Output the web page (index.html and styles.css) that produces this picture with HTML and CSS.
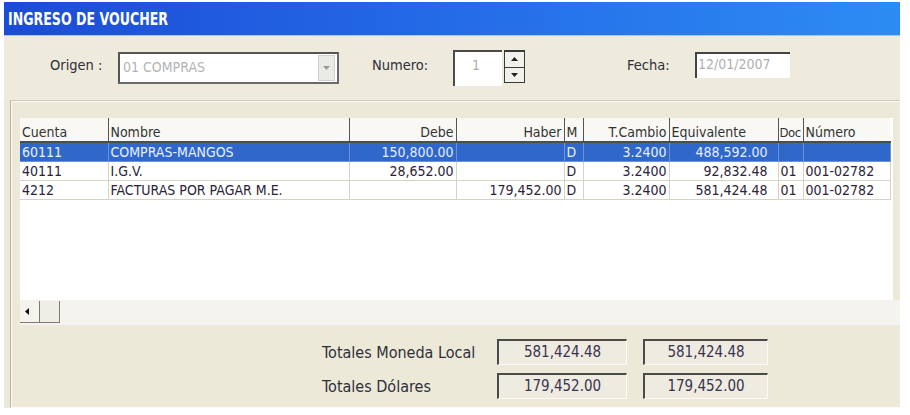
FILE: index.html
```html
<!DOCTYPE html>
<html lang="es">
<head>
<meta charset="utf-8">
<title>Ingreso de Voucher</title>
<link rel="stylesheet" href="styles.css">
</head>
<body>
<div class="window">
  <div class="titlebar"><span class="title">INGRESO DE VOUCHER</span></div>
  <div class="form">
    <span class="lbl lbl-origen">Origen :</span>
    <div class="combo">
      <span class="combo-text">01 COMPRAS</span>
      <span class="combo-btn"><svg width="9" height="5" viewBox="0 0 9 5"><path d="M1 0h7L4.5 4z" fill="#9a9a9a"/></svg></span>
    </div>
    <span class="lbl lbl-numero">Numero:</span>
    <div class="spin">
      <div class="spin-input">1</div>
      <div class="spin-btns">
        <span class="spin-btn"><svg width="7" height="4" viewBox="0 0 7 4"><path d="M3.5 0L7 4H0z" fill="#222"/></svg></span>
        <span class="spin-btn"><svg width="7" height="4" viewBox="0 0 7 4"><path d="M0 0h7L3.5 4z" fill="#222"/></svg></span>
      </div>
    </div>
    <span class="lbl lbl-fecha">Fecha:</span>
    <div class="datebox">12/01/2007</div>
  </div>
  <div class="panel">
    <div class="grid">
      <table>
        <colgroup>
          <col class="c-cuenta"><col class="c-nombre"><col class="c-debe"><col class="c-haber"><col class="c-m"><col class="c-tc"><col class="c-eq"><col class="c-doc"><col class="c-num">
        </colgroup>
        <thead>
          <tr>
            <th>Cuenta</th><th>Nombre</th><th class="r">Debe</th><th class="r">Haber</th><th>M</th><th class="r">T.Cambio</th><th>Equivalente</th><th class="doc">Doc</th><th class="last">Número</th>
          </tr>
        </thead>
        <tbody>
          <tr class="sel">
            <td>60111</td><td>COMPRAS-MANGOS</td><td class="r">150,800.00</td><td class="r"></td><td>D</td><td class="r">3.2400</td><td class="eq">488,592.00</td><td></td><td></td>
          </tr>
          <tr>
            <td>40111</td><td>I.G.V.</td><td class="r">28,652.00</td><td class="r"></td><td>D</td><td class="r">3.2400</td><td class="eq">92,832.48</td><td>01</td><td>001-02782</td>
          </tr>
          <tr>
            <td>4212</td><td>FACTURAS POR PAGAR M.E.</td><td class="r"></td><td class="r">179,452.00</td><td>D</td><td class="r">3.2400</td><td class="eq">581,424.48</td><td>01</td><td>001-02782</td>
          </tr>
        </tbody>
      </table>
    </div>
    <div class="hscroll">
      <span class="sb-btn"><svg width="4" height="7" viewBox="0 0 4 7"><path d="M4 0v7L0 3.5z" fill="#111"/></svg></span>
      <span class="sb-thumb"></span>
    </div>
    <div class="totals">
      <div class="tot-row">
        <span class="tot-label">Totales Moneda Local</span>
        <span class="tot-box w1">581,424.48</span>
        <span class="tot-box w2">581,424.48</span>
      </div>
      <div class="tot-row">
        <span class="tot-label">Totales Dólares</span>
        <span class="tot-box w1">179,452.00</span>
        <span class="tot-box w2">179,452.00</span>
      </div>
    </div>
  </div>
</div>
</body>
</html>
```
FILE: styles.css
```css
html, body {
  margin: 0;
  padding: 0;
  background: #ffffff;
}
body {
  font-family: "DejaVu Sans Condensed", "DejaVu Sans", sans-serif;
  color: #2b2535;
}
.window {
  margin: 2px 0 0 4px;
  width: 896px;
  height: 406px;
  background: #ece9d8;
}
.titlebar {
  height: 34px;
  background: linear-gradient(to right, #1c4bd5, #2368e6 45%, #2d8cf4);
  display: flex;
  align-items: center;
  padding-left: 4px;
  box-shadow: inset 0 -1px 0 #a9c6ee;
}
.title {
  color: #ffffff;
  font-weight: bold;
  font-size: 14px;
  display: inline-block;
  transform: scaleY(1.25);
}
.form {
  height: 64px;
  display: flex;
  align-items: center;
  padding-left: 46px;
  background: #eeebdd;
}
.lbl {
  font-size: 14.5px;
  color: #2f2f3a;
  margin-bottom: 6px;
}
.lbl-origen { width: 68px; }
.lbl-numero { width: 81px; margin-left: 33px; }
.lbl-fecha { width: 68px; margin-left: 102px; }
.combo {
  box-sizing: border-box;
  width: 221px;
  height: 32px;
  border: 2px solid #555555;
  border-right-color: #6a6a6a;
  border-bottom-color: #6a6a6a;
  background: #ffffff;
  display: flex;
  align-items: center;
  justify-content: space-between;
  padding: 0 2px 0 3px;
}
.combo-text {
  font-size: 14px;
  color: #b4b4b4;
  margin-bottom: 2px;
}
.combo-btn {
  box-sizing: border-box;
  width: 17px;
  height: 26px;
  background: #ebebe6;
  border: 1px solid #d2d2cc;
  display: flex;
  align-items: center;
  justify-content: center;
}
.spin {
  display: flex;
  gap: 2px;
  align-items: flex-start;
  height: 36px;
}
.spin-input {
  box-sizing: border-box;
  width: 49px;
  height: 36px;
  background: #ffffff;
  border-top: 2px solid #4a4a4a;
  border-left: 2px solid #4a4a4a;
  color: #b0b0b0;
  font-size: 14px;
  padding: 5px 0 0 17px;
}
.spin-btns {
  box-sizing: border-box;
  width: 21px;
  height: 33px;
  display: flex;
  flex-direction: column;
  border: 1px solid #3a3a3a;
  border-top-width: 2px;
}
.spin-btn {
  flex: 1;
  display: flex;
  align-items: center;
  justify-content: center;
  background: #f2f1ec;
}
.spin-btn + .spin-btn {
  border-top: 1px solid #3a3a3a;
}
.datebox {
  box-sizing: border-box;
  width: 95px;
  height: 26px;
  margin-bottom: 6px;
  background: #ffffff;
  border-top: 2px solid #444444;
  border-left: 2px solid #444444;
  color: #b0b0b0;
  font-size: 14px;
  padding: 2px 0 0 1px;
}
.panel {
  margin-left: 6px;
  height: 306px;
  border-top: 1px solid #cdc9b8;
  border-left: 1px solid #b8b4a2;
  border-bottom: 1px solid #fbfaf5;
  box-shadow: inset 1px 1px 0 #faf9f3;
}
.grid {
  margin: 17px 0 0 9px;
  width: 873px;
  height: 182px;
  background: #ffffff;
}
table {
  border-collapse: collapse;
  table-layout: fixed;
  width: 870px;
  font-size: 14px;
}
.c-cuenta { width: 88px; }
.c-nombre { width: 241px; }
.c-debe { width: 107px; }
.c-haber { width: 108px; }
.c-m { width: 19px; }
.c-tc { width: 86px; }
.c-eq { width: 109px; }
.c-doc { width: 25px; }
.c-num { width: 87px; }
th {
  height: 22px;
  padding: 0 1px 1px 2px;
  vertical-align: bottom;
  font-weight: normal;
  text-align: left;
  color: #333333;
  background: #f9f8f3;
  border-right: 1px solid #555555;
  border-bottom: 2px solid #4d4d4d;
  white-space: nowrap;
  overflow: hidden;
}
th.doc {
  padding-left: 1px;
  font-size: 13px;
  letter-spacing: -0.5px;
}
th.last { border-right: none; }
td {
  height: 18px;
  padding: 0 2px;
  border-right: 1px solid #d6d2c4;
  border-bottom: 1px solid #d6d2c4;
  white-space: nowrap;
  overflow: hidden;
  color: #2b2338;
}
.r { text-align: right; padding-right: 2px; }
td.eq { text-align: right; padding-right: 10px; }
tr.sel td {
  background: #2f67cb;
  color: #e9efff;
  border-right-color: #6d92d9;
  border-bottom-color: #6d92d9;
}
.hscroll {
  margin-left: 9px;
  height: 25px;
  background: #f4f3ee;
  display: flex;
  align-items: flex-start;
  padding-top: 1px;
  box-sizing: border-box;
}
.sb-btn {
  box-sizing: border-box;
  width: 20px;
  height: 22px;
  border-right: 1px solid #7a7a72;
  border-bottom: 1px solid #7a7a72;
  display: flex;
  align-items: center;
  justify-content: center;
  padding-right: 5px;
}
.sb-thumb {
  box-sizing: border-box;
  width: 20px;
  height: 22px;
  border-right: 1px solid #7a7a72;
  border-bottom: 1px solid #7a7a72;
  background: #efede5;
}
.totals {
  padding: 14px 0 0 311px;
  display: flex;
  flex-direction: column;
  gap: 8px;
}
.tot-row {
  display: flex;
  align-items: center;
  height: 26px;
}
.tot-label {
  width: 175px;
  font-size: 16px;
  color: #2f2f3a;
}
.tot-box {
  box-sizing: border-box;
  height: 26px;
  border-top: 2px solid #4a4a4a;
  border-left: 2px solid #4a4a4a;
  border-right: 1px solid #fbfaf4;
  border-bottom: 1px solid #fbfaf4;
  background: #eeebe0;
  font-size: 15px;
  color: #3a3350;
  text-align: center;
  line-height: 22px;
}
.w1 { width: 130px; }
.w2 { width: 125px; margin-left: 16px; }
```
